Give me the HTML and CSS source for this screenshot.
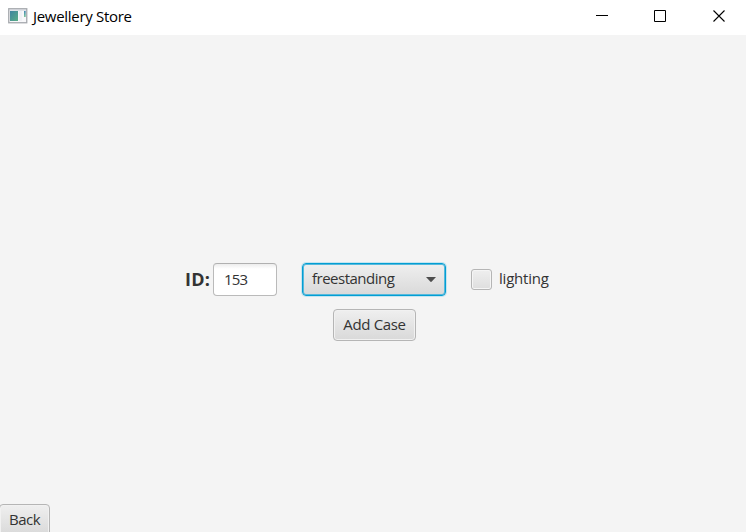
FILE: index.html
```html
<!DOCTYPE html>
<html lang="en">
<head>
<meta charset="utf-8">
<title>Jewellery Store</title>
<link rel="stylesheet" href="styles.css">
</head>
<body>
<div class="window">
  <header class="titlebar">
    <svg class="app-icon" width="20" height="16" viewBox="0 0 20 16">
      <defs>
        <linearGradient id="pane" x1="0" y1="0" x2="1" y2="1"><stop offset="0" stop-color="#3f84a0"/><stop offset="1" stop-color="#5aae86"/></linearGradient>
        <linearGradient id="bar" x1="0" y1="0" x2="0" y2="1"><stop offset="0" stop-color="#4287b4"/><stop offset="1" stop-color="#7cc79a"/></linearGradient>
      </defs>
      <rect x=".75" y=".75" width="18" height="14" fill="#f8f8fa" stroke="#a5a8ad" stroke-width="1.3"/>
      <path d="M1.5 2h16.5" stroke="#c6cbd2"/>
      <rect x="2" y="3" width="8" height="10" fill="url(#pane)"/>
      <rect x="11" y="3" width="3" height="10" fill="#f0f1f5"/>
      <rect x="16" y="3" width="1.7" height="6" fill="url(#bar)"/>
    </svg>
    <span class="title">Jewellery Store</span>
    <svg class="controls" width="130" height="12" viewBox="0 0 130 12" fill="none" stroke="#000">
      <path d="M0 5.5h12"/>
      <path d="M58.5.5h11v11h-11z"/>
      <path d="M117.5.5l11 11M128.5.5l-11 11" stroke-width="1.1"/>
    </svg>
  </header>
  <main class="content">
    <div class="row">
      <label class="id-label" for="case-id">ID:</label>
      <input class="field" id="case-id" value="153">
      <div class="combo"><span class="combo-text">freestanding</span><svg width="10" height="5" viewBox="0 0 10 5"><path d="M0 0h10L5.8 4.6Q5 5.3 4.2 4.6z" fill="#4d4d4d"/></svg></div>
      <div class="check"><span class="box"></span><span class="check-text">lighting</span></div>
    </div>
    <button class="button add">Add Case</button>
    <button class="button back">Back</button>
  </main>
</div>
</body>
</html>
```
FILE: styles.css
```css
* { box-sizing: border-box; }
body { margin: 0; font-family: "Open Sans", "Noto Sans", sans-serif; font-size: 15px; color: #333; }
.window { width: 746px; height: 532px; overflow: hidden; display: flex; flex-direction: column; background: #f4f4f4; }
.titlebar { height: 35px; flex: none; background: #fff; display: flex; align-items: flex-start; padding-left: 8px; color: #000; }
.app-icon { margin-top: 8px; flex: none; }
.title { margin-left: 5px; margin-top: 6px; line-height: 20px; letter-spacing: -.3px; white-space: nowrap; }
.controls { margin: 10px 20px 0 auto; flex: none; }
.content { flex: 1; min-height: 0; display: flex; flex-direction: column; padding-top: 228px; }
.row { display: flex; height: 33px; align-items: center; padding-left: 185px; flex: none; }
.id-label { width: 28px; padding-bottom: 2px; font-weight: 700; font-size: 18px; letter-spacing: .2px; white-space: nowrap; }
.field { width: 64px; height: 33px; padding: 0 0 2px 10px; border: 1px solid #bababa; border-top-color: #b0b0b0; border-radius: 4px; background: linear-gradient(#ededed, #fff 5px); font: inherit; color: #333; letter-spacing: -.85px; outline: none; }
.combo { margin-left: 25px; width: 144px; height: 33px; border: 1px solid #039ed3; border-radius: 4px; padding: 0 9px 1px 9px; display: flex; align-items: center; justify-content: space-between; background: linear-gradient(#efefef, #d9d9d9); box-shadow: 0 0 0 1px #c5e5f0, inset 0 0 0 1px #56b9dc; letter-spacing: -.5px; }
.combo-text { padding-bottom: 2px; }
.check { margin-left: 25px; display: flex; align-items: center; letter-spacing: -.2px; }
.box { width: 21px; height: 21px; border: 1px solid #b5b5b5; border-radius: 3px; background: linear-gradient(#efefef, #dedede); box-shadow: inset 0 0 0 1px #f5f5f5; }
.check-text { margin-left: 7px; padding-bottom: 3px; }
.button { border: 1px solid #b5b5b5; border-radius: 4px; padding: 0 0 2px; height: 32px; background: linear-gradient(#efefef, #d9d9d9); box-shadow: inset 0 0 0 1px #f1f1f1; font: inherit; color: #333; letter-spacing: -.35px; flex: none; }
.add { width: 83px; margin: 13px 0 0 333px; }
.back { width: 51px; margin: 163px 0 0 -1px; letter-spacing: -.5px; }
```
